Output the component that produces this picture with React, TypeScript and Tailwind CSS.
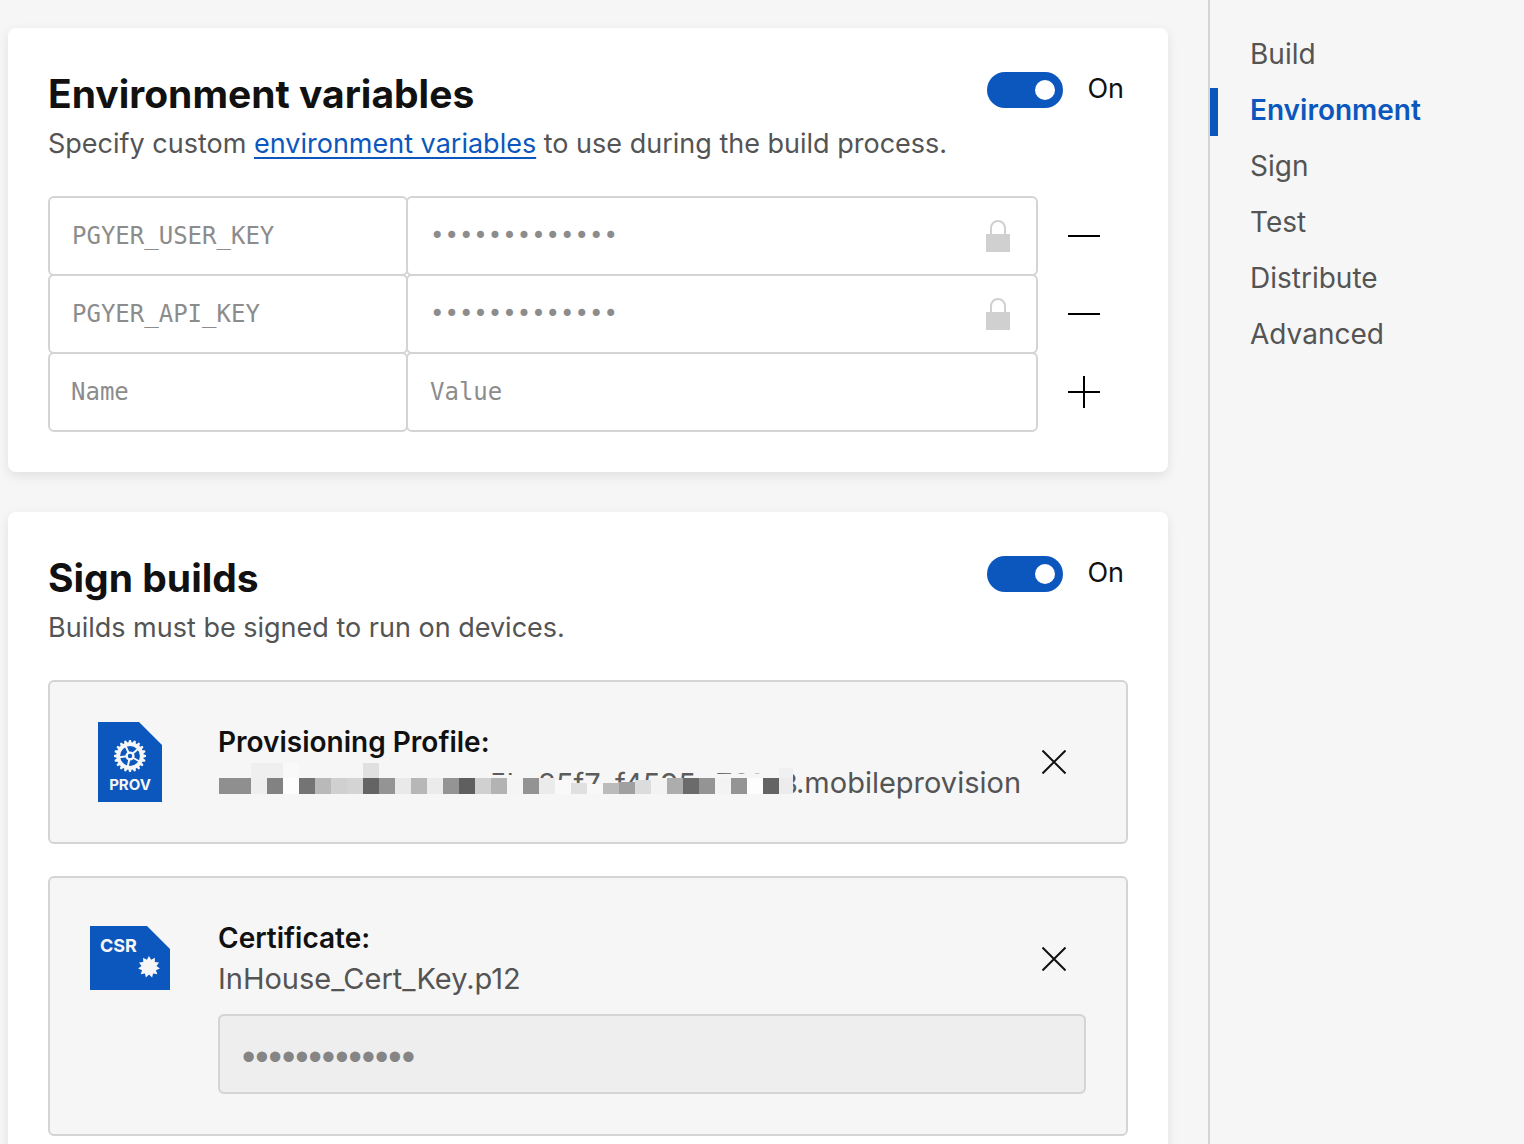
import React from "react";

const CELLS = ["#8f8f8f","#8f8f8f","#eeeeee","#828282","#fdfdfd","#747474","#b9b9b9","#d0d0d0","#d4d4d4","#646464","#949494","#e9e9e9","#b7b7b7","#ebebeb","#949494","#5f5f5f","#d0d0d0","#b3b3b3","#f5f5f5","#939393","#ebebeb","#f9f9f9","#e0e0e0","#f8f8f8","#bbbbbb","#a0a0a0","#dcdcdc","#f3f3f3","#adadad","#6b6b6b","#949494","#f3f3f3","#949494","#fdfdfd","#646464","#ececec"];

const CELL_TOPS: Record<number, number> = { 21: 18, 22: 21, 23: 22, 24: 21, 25: 20, 26: 18 };

function Toggle({ label }: { label: string }) {
  return (
    <label className="mt-1 flex h-9 shrink-0 items-center gap-6 text-[27px] leading-9 text-[#111]">
      <input type="checkbox" role="switch" defaultChecked aria-label={label} className="peer sr-only" />
      <span className="flex h-9 w-[76px] items-center justify-end rounded-full bg-[#0b57bd] pr-2">
        <span className="size-5 rounded-full bg-white" />
      </span>
      <span className="-mt-0.5">On</span>
    </label>
  );
}

function Lock() {
  return (
    <svg className="pointer-events-none absolute top-6 right-7" width="24" height="32" viewBox="0 0 24 32" aria-hidden="true">
      <path d="M5 15V8a7 7 0 0 1 14 0v7" fill="none" stroke="#d0d0d0" strokeWidth="2" />
      <rect y="14" width="24" height="18" fill="#d0d0d0" />
    </svg>
  );
}

const FIELD = "h-20 w-full min-w-0 rounded-md border-2 border-[#d4d4d4] bg-transparent font-['DejaVu_Sans_Mono',monospace] text-2xl text-[#8c8c8c] placeholder:text-[#8c8c8c] outline-none";

function Row({ name, isNew }: { name?: string; isNew?: boolean }) {
  return (
    <div className="-mt-0.5 flex items-center">
      <div className="w-[360px] shrink-0">
        <input aria-label="Variable name" defaultValue={name} placeholder="Name" className={`${FIELD} ${isNew ? "px-[21px]" : "px-[22px]"}`} />
      </div>
      <div className="relative -ml-0.5 flex-1">
        <input aria-label="Variable value" type={isNew ? "text" : "password"} defaultValue={isNew ? "" : "xxxxxxxxxxxxx"} placeholder="Value" className={`${FIELD} ${isNew ? "px-[22px]" : "pl-[22px] pr-16"}`} />
        {!isNew && <Lock />}
      </div>
      <button aria-label={isNew ? "Add variable" : "Remove variable"} className="mr-7 ml-[30px] size-8 shrink-0">
        <svg width="32" height="32" viewBox="0 0 32 32" stroke="#000" strokeWidth="2">
          <path d={isNew ? "M0 16H32M16 0V32" : "M0 16H32"} />
        </svg>
      </button>
    </div>
  );
}

function Close({ label }: { label: string }) {
  return (
    <button aria-label={label} className="size-6 shrink-0">
      <svg width="24" height="24" viewBox="0 0 24 24" stroke="#111" strokeWidth="2">
        <path d="M0.5 0.5L23.5 23.5M23.5 0.5L0.5 23.5" />
      </svg>
    </button>
  );
}

function Gear() {
  const teeth = Array.from({ length: 20 }, (_, i) => i * 18);
  return (
    <g transform="translate(32 34)">
      {teeth.map((a) => (
        <path key={a} d="M-1.8 -13L-0.9 -16H0.9L1.8 -13Z" fill="#f6f6f6" transform={`rotate(${a})`} />
      ))}
      <circle r="11.8" fill="none" stroke="#f6f6f6" strokeWidth="3.8" />
      {[30, 102, 174, 246, 318].map((a) => (
        <path key={a} d="M3 0H11" stroke="#f6f6f6" strokeWidth="2" transform={`rotate(${a})`} />
      ))}
      <circle r="3.4" fill="none" stroke="#f6f6f6" strokeWidth="2.4" />
    </g>
  );
}

function ProvIcon() {
  return (
    <svg width="64" height="80" viewBox="0 0 64 80" aria-hidden="true">
      <path d="M0 0H41L64 23V80H0Z" fill="#0b57bd" />
      <Gear />
      <text x="32" y="68" textAnchor="middle" fill="#f6f6f6" className="font-['Inter',sans-serif] text-[15px] font-bold">PROV</text>
    </svg>
  );
}

function CsrIcon() {
  const star = Array.from({ length: 22 }, (_, i) => {
    const r = i % 2 ? 7.6 : 11;
    const a = (i * Math.PI) / 11 - Math.PI / 2;
    return `${59 + r * Math.cos(a)},${41 + r * Math.sin(a)}`;
  }).join(" ");
  return (
    <svg width="80" height="64" viewBox="0 0 80 64" aria-hidden="true">
      <path d="M0 0H57L80 23V64H0Z" fill="#0b57bd" />
      <polygon points={star} fill="#f6f6f6" />
      <text x="10" y="26" fill="#f6f6f6" className="font-['Inter',sans-serif] text-[18px] font-bold">CSR</text>
    </svg>
  );
}

function MaskedName() {
  return (
    <svg width="578" height="42" viewBox="0 0 578 42" className="shrink-0 overflow-visible" aria-hidden="true">
      <g fill="#5c5c5c" className="font-['Inter',sans-serif] text-[29px]">
        <text x="271" y="32">5b</text>
        <text x="320" y="32">85f7</text>
        <text x="397" y="32">f4595</text>
        <text x="498" y="32">761</text>
        <text x="580" y="32" textAnchor="end">3</text>
      </g>
      <path d="M0 0H265V13H318V16H340V18L356 22H385L397 21L425 20L440 17L480 16H496V12L560 11V4H575V42H0Z" fill="#f6f6f6" />
      {CELLS.map((c, i) => {
        const top = CELL_TOPS[i] ?? 16;
        return <rect key={i} x={1 + i * 16} y={top} width={i === 35 ? 14 : 16} height={32 - top} fill={c} />;
      })}
      <rect x="33" y="1" width="32" height="15" fill="#efefef" />
      <rect x="65" y="1" width="16" height="15" fill="#f9f9f9" />
      <rect x="145" y="1" width="16" height="15" fill="#e0e0e0" />
      <rect x="561" y="6" width="14" height="10" fill="#f0f0f0" />
    </svg>
  );
}

const CARD = "rounded-lg bg-white shadow-[0_4px_12px_rgba(0,0,0,0.09)]";
const H2 = "text-[39px] font-bold leading-[52px] text-[#111]";
const LINK = "text-[#0b57bd] underline decoration-2 underline-offset-4";

export default function App() {
  return (
    <div className="flex h-screen overflow-hidden bg-[#f6f6f6] font-['Inter',sans-serif] text-[28px] text-[#545454]">
      <main className="flex min-w-0 flex-1 flex-col gap-10 pt-7 pr-10 pl-2">
        <section className={`${CARD} shrink-0 p-10`}>
          <header className="flex items-start justify-between pr-1">
            <div>
              <h2 className={H2}>Environment variables</h2>
              <p className="mt-1 text-[27px] leading-10">
                Specify custom <a href="#variables" className={LINK}>environment variables</a> to use during the build process.
              </p>
            </div>
            <Toggle label="Environment variables" />
          </header>
          <div className="mt-[34px]">
            <Row name="PGYER_USER_KEY" />
            <Row name="PGYER_API_KEY" />
            <Row isNew />
          </div>
        </section>

        <section className={`${CARD} shrink-0 p-10`}>
          <header className="flex items-start justify-between pr-1">
            <div>
              <h2 className={H2}>Sign builds</h2>
              <p className="mt-1 text-[27px] leading-10">Builds must be signed to run on devices.</p>
            </div>
            <Toggle label="Sign builds" />
          </header>
          <div className="mt-8 flex h-[164px] items-center rounded-md border-2 border-[#d4d4d4] bg-[#f6f6f6] pr-[60px] pl-10">
            <div className="flex w-20 shrink-0 justify-center"><ProvIcon /></div>
            <div className="ml-12 min-w-0 flex-1 pt-0.5">
              <h3 className="font-semibold leading-10 text-[#111]">Provisioning Profile:</h3>
              <p className="flex whitespace-nowrap text-[29px] leading-[42px]">
                <MaskedName />.mobileprovision
              </p>
            </div>
            <Close label="Remove provisioning profile" />
          </div>
          <div className="mt-8 flex items-start rounded-md border-2 border-[#d4d4d4] bg-[#f6f6f6] p-10">
            <div className="mt-2 w-20 shrink-0"><CsrIcon /></div>
            <div className="ml-12 min-w-0 flex-1">
              <div className="flex items-center justify-between pr-5">
                <div>
                  <h3 className="font-semibold leading-10 text-[#111]">Certificate:</h3>
                  <p className="text-[29px] leading-[42px]">InHouse_Cert_Key.p12</p>
                </div>
                <Close label="Remove certificate" />
              </div>
              <input type="password" aria-label="Certificate password" defaultValue="xxxxxxxxxxxxx" className="mt-3.5 h-20 w-full rounded-md border-2 border-[#d4d4d4] bg-[#eee] px-[22px] pt-1.5 font-['Liberation_Sans',sans-serif] text-[38px] text-[#858585] outline-none" />
            </div>
          </div>
        </section>
      </main>

      <nav className="w-[316px] shrink-0 border-l-2 border-[#d4d4d4] pt-8">
        <ul className="flex flex-col gap-2">
          {["Build", "Environment", "Sign", "Test", "Distribute", "Advanced"].map((item) => (
            <li key={item}>
              <a
                href={`#${item.toLowerCase()}`}
                className={
                  item === "Environment"
                    ? "block border-l-8 border-[#0b57bd] pb-1 pl-8 leading-[44px] font-semibold text-[#0b57bd]"
                    : "block border-l-8 border-transparent pb-1 pl-8 leading-[44px]"
                }
              >
                {item}
              </a>
            </li>
          ))}
        </ul>
      </nav>
    </div>
  );
}
